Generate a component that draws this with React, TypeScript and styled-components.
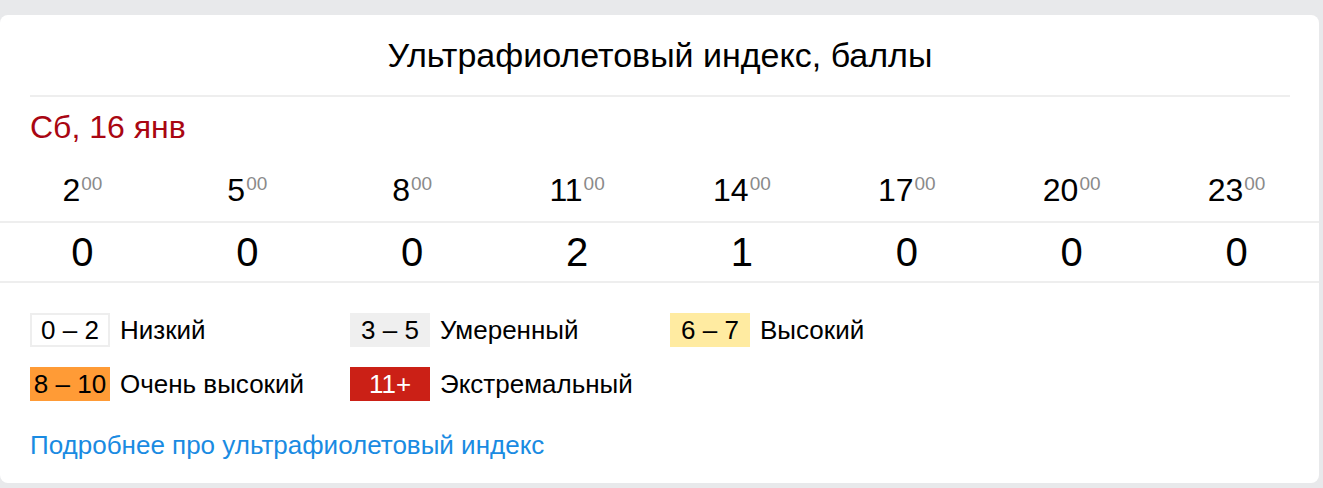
import React from "react";
import styled, { createGlobalStyle } from "styled-components";

const GlobalStyle = createGlobalStyle`
  html, body {
    margin: 0;
    padding: 0;
    background: #e8e9eb;
    font-family: "Liberation Sans", Arial, sans-serif;
    color: #000;
  }
  * { box-sizing: border-box; }
`;

const Page = styled.div`
  padding: 15px 4px 5px 0;
`;

const Card = styled.section`
  width: 1319px;
  height: 468px;
  background: #fff;
  border-radius: 8px;
  display: flex;
  flex-direction: column;
  overflow: hidden;
`;

const Title = styled.h1`
  margin: 0 29px 0 30px;
  padding: 20px 0 20px;
  font-size: 34px;
  line-height: 40px;
  font-weight: 400;
  text-align: center;
  border-bottom: 2px solid #eeeeee;
`;

const DateLabel = styled.div`
  margin: 11px 0 0 30px;
  font-size: 32px;
  line-height: 38px;
  color: #a90612;
`;

const Grid = styled.div<{ $height: number; $bordered?: boolean }>`
  display: grid;
  grid-template-columns: repeat(8, 1fr);
  height: ${(p) => p.$height}px;
  align-items: ${(p) => (p.$bordered ? "center" : "flex-end")};
  ${(p) => (p.$bordered ? "border-top: 2px solid #eeeeee; border-bottom: 2px solid #eeeeee;" : "")}
`;

const HourCell = styled.div`
  display: flex;
  justify-content: center;
  align-items: flex-start;
  padding-bottom: 12px;
`;

const HourMain = styled.span`
  font-size: 32px;
  line-height: 38px;
`;

const HourSup = styled.span`
  font-size: 19px;
  line-height: 19px;
  color: #8a8a8a;
  margin: 3px 0 0 1px;
`;

const ValueCell = styled.div`
  text-align: center;
  font-size: 40px;
  line-height: 48px;
`;

const Legend = styled.div`
  display: grid;
  grid-template-columns: repeat(3, 320px);
  row-gap: 20px;
  padding: 30px 0 0 30px;
`;

const LegendItem = styled.div`
  display: flex;
  align-items: center;
  gap: 10px;
`;

const Swatch = styled.span<{ $bg: string; $fg?: string; $border?: boolean }>`
  width: 80px;
  height: 34px;
  display: flex;
  align-items: center;
  justify-content: center;
  background: ${(p) => p.$bg};
  color: ${(p) => p.$fg || "#000"};
  border: ${(p) => (p.$border ? "2px solid #eeeeee" : "none")};
  font-size: 26px;
  line-height: 30px;
  white-space: pre;
`;

const LegendLabel = styled.span`
  font-size: 26px;
  line-height: 30px;
`;

const MoreLink = styled.a`
  display: block;
  margin: 29px 0 0 30px;
  font-size: 26px;
  line-height: 30px;
  color: #1a8be2;
  text-decoration: none;
`;

const hours = [2, 5, 8, 11, 14, 17, 20, 23];
const values = [0, 0, 0, 2, 1, 0, 0, 0];

const legend = [
  { range: "0 – 2", label: "Низкий", bg: "#fff", border: true },
  { range: "3 – 5", label: "Умеренный", bg: "#efefef" },
  { range: "6 – 7", label: "Высокий", bg: "#ffeba1" },
  { range: "8 – 10", label: "Очень высокий", bg: "#ff9b36" },
  { range: "11+", label: "Экстремальный", bg: "#cb2016", fg: "#fff" },
];

export default function App() {
  return (
    <>
      <GlobalStyle />
      <Page>
        <Card>
          <Title>Ультрафиолетовый индекс, баллы</Title>
          <DateLabel>Сб, 16 янв</DateLabel>
          <Grid $height={75}>
            {hours.map((h) => (
              <HourCell key={h}>
                <HourMain>{h}</HourMain>
                <HourSup>00</HourSup>
              </HourCell>
            ))}
          </Grid>
          <Grid $height={62} $bordered>
            {values.map((v, i) => (
              <ValueCell key={i}>{v}</ValueCell>
            ))}
          </Grid>
          <Legend>
            {legend.map((l) => (
              <LegendItem key={l.range}>
                <Swatch $bg={l.bg} $fg={l.fg} $border={l.border}>
                  {l.range}
                </Swatch>
                <LegendLabel>{l.label}</LegendLabel>
              </LegendItem>
            ))}
          </Legend>
          <MoreLink href="#">Подробнее про ультрафиолетовый индекс</MoreLink>
        </Card>
      </Page>
    </>
  );
}
